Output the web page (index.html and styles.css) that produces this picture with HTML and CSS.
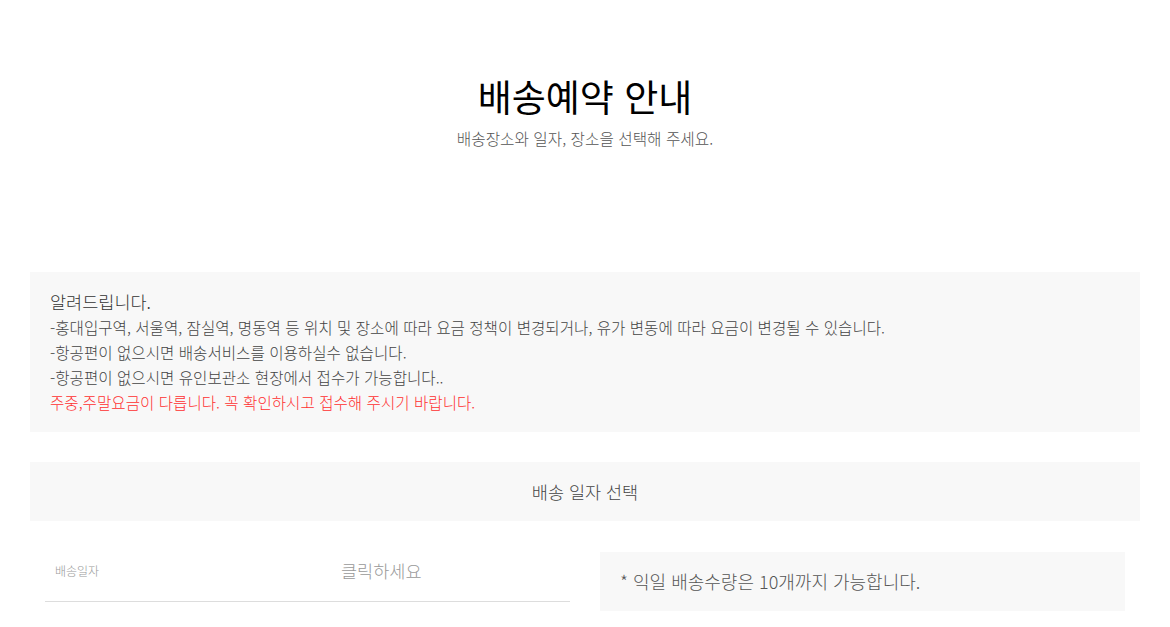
FILE: index.html
```html
<!DOCTYPE html>
<html lang="ko">
<head>
  <meta charset="UTF-8">
  <title>배송예약 안내</title>
  <link rel="stylesheet" href="styles.css">
</head>
<body>
  <div class="page-head">
    <h1>배송예약 안내</h1>
    <p class="sub">배송장소와 일자, 장소을 선택해 주세요.</p>
  </div>

  <div class="wrap">
    <div class="notice">
      <p class="notice-title">알려드립니다.</p>
      <p>-홍대입구역, 서울역, 잠실역, 명동역 등 위치 및 장소에 따라 요금 정책이 변경되거나, 유가 변동에 따라 요금이 변경될 수 있습니다.</p>
      <p>-항공편이 없으시면 배송서비스를 이용하실수 없습니다.</p>
      <p>-항공편이 없으시면 유인보관소 현장에서 접수가 가능합니다..</p>
      <p class="red">주중,주말요금이 다릅니다. 꼭 확인하시고 접수해 주시기 바랍니다.</p>
    </div>

    <div class="section-title">배송 일자 선택</div>

    <div class="date-row">
      <div class="field">
        <label for="deliveryDate">배송일자</label>
        <input type="text" id="deliveryDate" placeholder="클릭하세요" readonly>
      </div>
      <div class="info-box">* 익일 배송수량은 10개까지 가능합니다.</div>
    </div>
  </div>
</body>
</html>
```

FILE: styles.css
```css
* {
  box-sizing: border-box;
}
body {
  margin: 0;
  font-family: "Noto Sans CJK KR", "Noto Sans", sans-serif;
  font-weight: 300;
  color: #333;
  background-color: #fff;
}
p {
  margin: 0;
}
.page-head {
  padding-top: 70px;
  text-align: center;
}
.page-head h1 {
  margin: 0;
  font-size: 37px;
  line-height: 52px;
  font-weight: 400;
  color: #000;
}
.page-head .sub {
  margin-top: 7px;
  font-size: 15.7px;
  line-height: 20px;
  color: #555;
}
.wrap {
  padding: 0 30px;
  margin-top: 123px;
}
.notice {
  background-color: #f8f8f8;
  padding: 17px 20px;
  font-size: 15.6px;
  line-height: 25px;
  color: #444;
}
.notice .notice-title {
  font-size: 17.5px;
  line-height: 26px;
  color: #333;
}
.notice .red {
  color: #ff3030;
}
.section-title {
  margin-top: 30px;
  background-color: #f8f8f8;
  height: 59px;
  line-height: 59px;
  text-align: center;
  font-size: 17.5px;
  color: #444;
}
.date-row {
  display: grid;
  grid-template-columns: 1fr 1fr;
  gap: 30px;
  padding: 31px 15px 0;
}
.field {
  display: flex;
  align-items: flex-start;
  height: 50px;
  padding: 6px 0 0 10px;
  border-bottom: 1px solid #ddd;
}
.field label {
  flex: 0 0 286px;
  margin-top: 4px;
  font-size: 12px;
  line-height: 17px;
  color: #999;
}
.field input {
  flex: 1;
  min-width: 0;
  height: 25px;
  border: none;
  outline: none;
  padding: 0;
  font-family: inherit;
  font-weight: 300;
  font-size: 17.5px;
  line-height: 25px;
  color: #333;
  background: transparent;
}
.field input::placeholder {
  color: #999;
}
.info-box {
  height: 59px;
  line-height: 59px;
  padding-left: 20px;
  background-color: #f8f8f8;
  font-size: 18px;
  color: #555;
}
```
